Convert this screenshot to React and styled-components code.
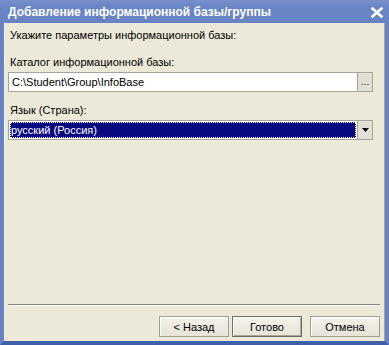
import React from 'react'
import styled, { createGlobalStyle } from 'styled-components'

const GlobalStyle = createGlobalStyle`
  html, body {
    margin: 0;
    padding: 0;
    background: #ece9d8;
  }
  body {
    font-family: Tahoma, "Liberation Sans", "DejaVu Sans", sans-serif;
    font-size: 11px;
    color: #000;
  }
`

function App() {
  return (
    <Window>
      <GlobalStyle />
      <TitleBar>
        <Title>Добавление информационной базы/группы</Title>
        <CloseButton>
          <svg width="12" height="11" viewBox="0 0 12 11">
            <path d="M1.5 1.5 L10.5 9.5 M10.5 1.5 L1.5 9.5" stroke="#fff" strokeWidth="2.6" strokeLinecap="square" />
          </svg>
        </CloseButton>
      </TitleBar>
      <Frame>
        <Content>
          <Label $lead>Укажите параметры информационной базы:</Label>
          <Field>
            <Label>Каталог информационной базы:</Label>
            <Combo>
              <Input>C:\Student\Group\InfoBase</Input>
              <SideButton>...</SideButton>
            </Combo>
          </Field>
          <Field>
            <Label>Язык (Страна):</Label>
            <Combo>
              <Input $selected>
                <Selection>русский (Россия)</Selection>
              </Input>
              <SideButton>
                <svg width="7" height="4" viewBox="0 0 7 4">
                  <path d="M0 0 H7 L3.5 4 Z" fill="#000" />
                </svg>
              </SideButton>
            </Combo>
          </Field>
        </Content>
        <Separator />
        <Buttons>
          <Button>&lt; Назад</Button>
          <Button $default>Готово</Button>
          <Button $gap>Отмена</Button>
        </Buttons>
      </Frame>
    </Window>
  )
}

export default App

const Window = styled.div`
  width: 389px;
  height: 345px;
  display: flex;
  flex-direction: column;
  background: #ece9d8;
  overflow: hidden;
`

const TitleBar = styled.div`
  height: 23px;
  flex: none;
  display: flex;
  align-items: center;
  justify-content: space-between;
  padding: 0 6px 0 8px;
  background: linear-gradient(#7890cc, #6a85c5 30%, #6783c4);
  color: #fff;
`

const Title = styled.div`
  font-family: "Liberation Sans", Tahoma, sans-serif;
  font-weight: bold;
  font-size: 12px;
  white-space: nowrap;
  padding-top: 1px;
`

const CloseButton = styled.div`
  display: flex;
  align-items: center;
  padding-top: 1px;
`

const Frame = styled.div`
  flex: 1;
  display: flex;
  flex-direction: column;
  border-left: 4px solid #6783c4;
  border-right: 4px solid #6783c4;
  border-bottom: 4px solid #3f5fa8;
  box-shadow: inset 1px 0 0 #f7f5ee, inset -1px 0 0 #aca899;
`

const Content = styled.div`
  flex: 1;
  display: flex;
  flex-direction: column;
  gap: 11px;
  padding: 5px 12px 0 4px;
`

const Field = styled.div`
  display: flex;
  flex-direction: column;
  gap: 3px;
`

const Label = styled.div`
  line-height: 14px;
  padding-left: 2px;
  margin-bottom: ${p => (p.$lead ? '2px' : '0')};
  white-space: nowrap;
`

const Combo = styled.div`
  display: flex;
  height: 20px;
`

const Input = styled.div`
  flex: 1;
  display: flex;
  align-items: center;
  padding: 0 ${p => (p.$selected ? '1px' : '3px')};
  background: #fff;
  border: 1px solid #a5a59d;
  border-right: none;
  white-space: nowrap;
`

const Selection = styled.div`
  flex: 1;
  align-self: stretch;
  margin: 1px 0;
  display: flex;
  align-items: center;
  padding-left: 1px;
  background: #0a0a80;
  color: #fff;
  outline: 1px dotted #fff;
  outline-offset: -1px;
`

const SideButton = styled.div`
  width: 14px;
  display: flex;
  align-items: center;
  justify-content: center;
  background: #e2dfd4;
  border: 1px solid #a5a59d;
  font-size: 10px;
  line-height: 1;
  color: #333;
`

const Separator = styled.div`
  height: 1px;
  margin: 0 5px 0 4px;
  background: #87847a;
  border-bottom: 1px solid #fff;
`

const Buttons = styled.div`
  display: flex;
  justify-content: flex-end;
  gap: 3px;
  padding: 10px 5px 4px 0;
`

const Button = styled.div`
  width: 70px;
  height: 21px;
  box-sizing: border-box;
  margin-left: ${p => (p.$gap ? '5px' : '0')};
  display: flex;
  align-items: center;
  justify-content: center;
  border: 1px solid ${p => (p.$default ? '#6e6c64' : '#a19f95')};
  background: linear-gradient(#f4f2ea, #e6e3d8);
  box-shadow: ${p => (p.$default ? 'inset 1px 1px 0 #fff, inset -1px -1px 0 #aca899' : 'inset 1px 1px 0 #fff')};
`
